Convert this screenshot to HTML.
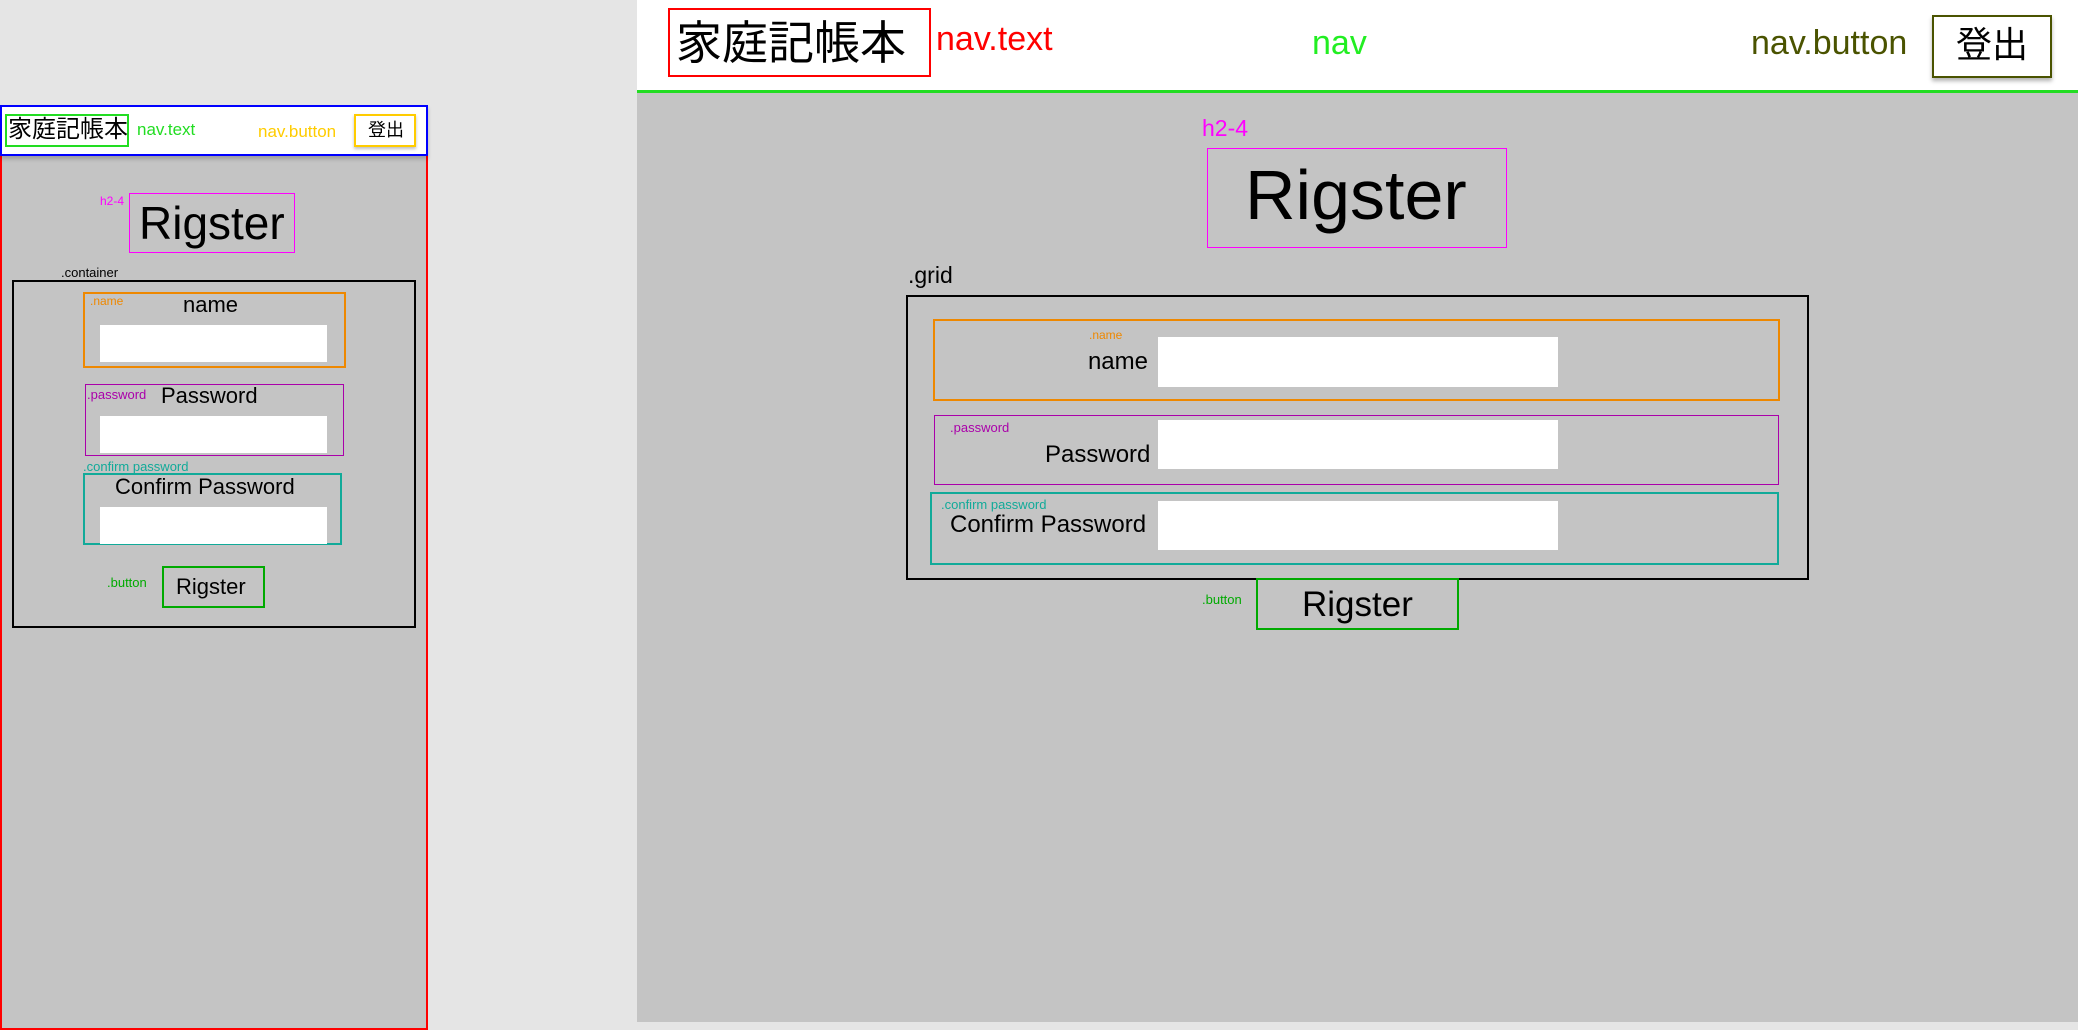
<!DOCTYPE html>
<html><head><meta charset="utf-8"><style>
*{margin:0;padding:0;box-sizing:border-box}
body{width:2078px;height:1030px;background:#e5e5e5;position:relative;overflow:hidden;font-family:"Liberation Sans","Noto Sans CJK JP",sans-serif;color:#000}
div,span{position:absolute}
.t{white-space:nowrap;line-height:1}
.in{background:#fff}
</style></head><body>
<!-- left -->
<div style="left:0;top:155px;width:428px;height:875px;background:#c4c4c4;border:2px solid #f00;border-top:none"></div>
<div style="left:0;top:105px;width:428px;height:51px;background:#fff;border:2px solid #00f;box-shadow:0 3px 4px rgba(0,0,0,.2)"></div>
<div style="left:5px;top:114px;width:124px;height:33px;border:2px solid #2d2;"></div>
<span class="t" style="left:8px;top:118px;font-size:24px">家庭記帳本</span>
<span class="t" style="left:137px;top:121px;font-size:17px;color:#2d2">nav.text</span>
<span class="t" style="left:258px;top:123px;font-size:17px;color:#fc0">nav.button</span>
<div style="left:354px;top:114px;width:62px;height:33px;border:2px solid #fc0;box-shadow:0 2px 3px rgba(0,0,0,.25)"></div>
<span class="t" style="left:368px;top:121px;font-size:18px">登出</span>
<span class="t" style="left:100px;top:195px;font-size:12px;color:#f0f">h2-4</span>
<div style="left:129px;top:193px;width:166px;height:60px;border:1px solid #f0f"></div>
<span class="t" style="left:139px;top:200px;font-size:46px">Rigster</span>
<span class="t" style="left:61px;top:266px;font-size:13px">.container</span>
<div style="left:12px;top:280px;width:404px;height:348px;border:2px solid #000"></div>
<div style="left:83px;top:292px;width:263px;height:76px;border:2px solid #e80"></div>
<span class="t" style="left:90px;top:295px;font-size:12px;color:#e80">.name</span>
<span class="t" style="left:183px;top:294px;font-size:22px">name</span>
<div class="in" style="left:100px;top:325px;width:227px;height:37px"></div>
<div style="left:85px;top:384px;width:259px;height:72px;border:1px solid #a0a"></div>
<span class="t" style="left:87px;top:388px;font-size:13px;color:#a0a">.password</span>
<span class="t" style="left:161px;top:385px;font-size:22px">Password</span>
<div class="in" style="left:100px;top:416px;width:227px;height:37px"></div>
<span class="t" style="left:83px;top:460px;font-size:13px;color:#1a9">.confirm password</span>
<div style="left:83px;top:473px;width:259px;height:72px;border:2px solid #1a9"></div>
<span class="t" style="left:115px;top:476px;font-size:22px">Confirm Password</span>
<div class="in" style="left:100px;top:507px;width:227px;height:37px"></div>
<span class="t" style="left:107px;top:576px;font-size:13px;color:#0a0">.button</span>
<div style="left:162px;top:566px;width:103px;height:42px;border:2px solid #0a0"></div>
<span class="t" style="left:176px;top:576px;font-size:22px">Rigster</span>
<!-- right -->
<div style="left:637px;top:0;width:1441px;height:1022px;background:#c4c4c4"></div>
<div style="left:637px;top:0;width:1441px;height:93px;background:#fff;border-bottom:3px solid #2d2"></div>
<div style="left:668px;top:8px;width:263px;height:69px;border:2px solid #f00"></div>
<span class="t" style="left:676px;top:20px;font-size:46px">家庭記帳本</span>
<span class="t" style="left:936px;top:22px;font-size:34px;color:#f00">nav.text</span>
<span class="t" style="left:1312px;top:26px;font-size:34px;color:#2e2">nav</span>
<span class="t" style="left:1751px;top:26px;font-size:34px;color:#4a5300">nav.button</span>
<div style="left:1932px;top:15px;width:120px;height:63px;border:2px solid #4a5300;box-shadow:0 3px 4px rgba(0,0,0,.3)"></div>
<span class="t" style="left:1956px;top:27px;font-size:36px">登出</span>
<span class="t" style="left:1202px;top:117px;font-size:23px;color:#f0f">h2-4</span>
<div style="left:1207px;top:148px;width:300px;height:100px;border:1px solid #f0f"></div>
<span class="t" style="left:1245px;top:160px;font-size:70px">Rigster</span>
<span class="t" style="left:908px;top:264px;font-size:23px">.grid</span>
<div style="left:906px;top:295px;width:903px;height:285px;border:2px solid #000"></div>
<div style="left:933px;top:319px;width:847px;height:82px;border:2px solid #e80"></div>
<span class="t" style="left:1089px;top:329px;font-size:12px;color:#e80">.name</span>
<span class="t" style="left:1087px;top:350px;font-size:24px;width:61px;text-align:right">name</span>
<div class="in" style="left:1158px;top:337px;width:400px;height:50px"></div>
<div style="left:934px;top:415px;width:845px;height:70px;border:1px solid #a0a"></div>
<span class="t" style="left:950px;top:421px;font-size:13px;color:#a0a">.password</span>
<span class="t" style="left:1045px;top:443px;font-size:24px">Password</span>
<div class="in" style="left:1158px;top:420px;width:400px;height:49px"></div>
<div style="left:930px;top:492px;width:849px;height:73px;border:2px solid #1a9"></div>
<span class="t" style="left:941px;top:498px;font-size:13px;color:#1a9">.confirm password</span>
<span class="t" style="left:950px;top:513px;font-size:24px">Confirm Password</span>
<div class="in" style="left:1158px;top:501px;width:400px;height:49px"></div>
<span class="t" style="left:1202px;top:593px;font-size:13px;color:#0a0">.button</span>
<div style="left:1256px;top:578px;width:203px;height:52px;border:2px solid #0a0"></div>
<span class="t" style="left:1302px;top:587px;font-size:35px">Rigster</span>
</body></html>
